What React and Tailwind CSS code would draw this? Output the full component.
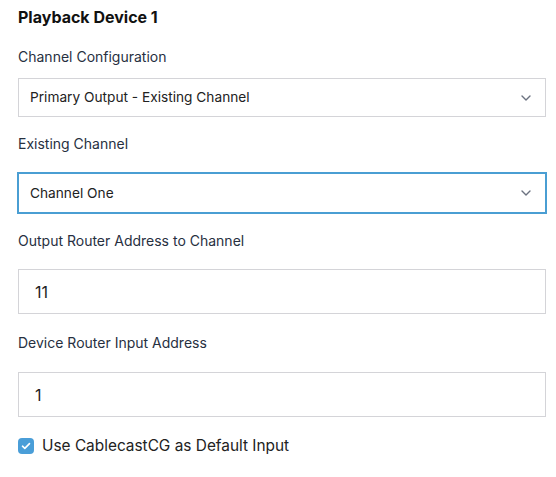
import React from "react";

function Chevron() {
  return (
    <svg width="10" height="6" viewBox="0 0 10 6" fill="none" className="absolute right-[14px] top-1/2 -translate-y-1/2">
      <path d="M1 1l4 4 4-4" stroke="#6b7280" strokeWidth="1.4" strokeLinecap="round" strokeLinejoin="round" />
    </svg>
  );
}

export default function App() {
  return (
    <div className="w-[556px] h-[477px] bg-white pl-[18px] pt-[5px] text-[#1f2937]" style={{ fontFamily: "Inter, 'Liberation Sans', sans-serif" }}>
      <div className="text-[16px] leading-[24px] font-bold text-[#111]">Playback Device 1</div>

      <div className="mt-[18px] text-[14px] leading-[20px] text-[#27303f]">Channel Configuration</div>
      <div className="relative mt-[11px] w-[528px] h-[39px] border border-[#d4d4d8] flex items-center pl-[11px] text-[13.7px] text-[#222]">
        Primary Output - Existing Channel
        <Chevron />
      </div>

      <div className="mt-[17px] text-[14px] leading-[20px] text-[#27303f]">Existing Channel</div>
      <div className="relative mt-[19px] w-[528px] h-[40px] border border-[#4a9ed3] ring-1 ring-[#4a9ed3] flex items-center pl-[11px] text-[13.7px] text-[#222]">
        Channel One
        <Chevron />
      </div>

      <div className="mt-[18px] text-[14px] leading-[20px] text-[#27303f]">Output Router Address to Channel</div>
      <div className="mt-[18px] w-[528px] h-[45px] border border-[#d4d4d8] flex items-center pl-[16px] text-[16px] text-[#222]">
        11
      </div>

      <div className="mt-[19px] text-[14px] leading-[20px] text-[#27303f]">Device Router Input Address</div>
      <div className="mt-[19px] w-[528px] h-[45px] border border-[#d4d4d8] flex items-center pl-[16px] text-[16px] text-[#222]">
        1
      </div>

      <div className="mt-[19px] flex items-center gap-[8px]">
        <div className="w-[16px] h-[16px] rounded-[4px] bg-[#4a9ed8] flex items-center justify-center">
          <svg width="10" height="8" viewBox="0 0 10 8" fill="none">
            <path d="M1.5 4.2l2.3 2.2L8.5 1.6" stroke="white" strokeWidth="1.6" strokeLinecap="round" strokeLinejoin="round" />
          </svg>
        </div>
        <span className="text-[15.4px] leading-[20px] text-[#222]">Use CablecastCG as Default Input</span>
      </div>
    </div>
  );
}
